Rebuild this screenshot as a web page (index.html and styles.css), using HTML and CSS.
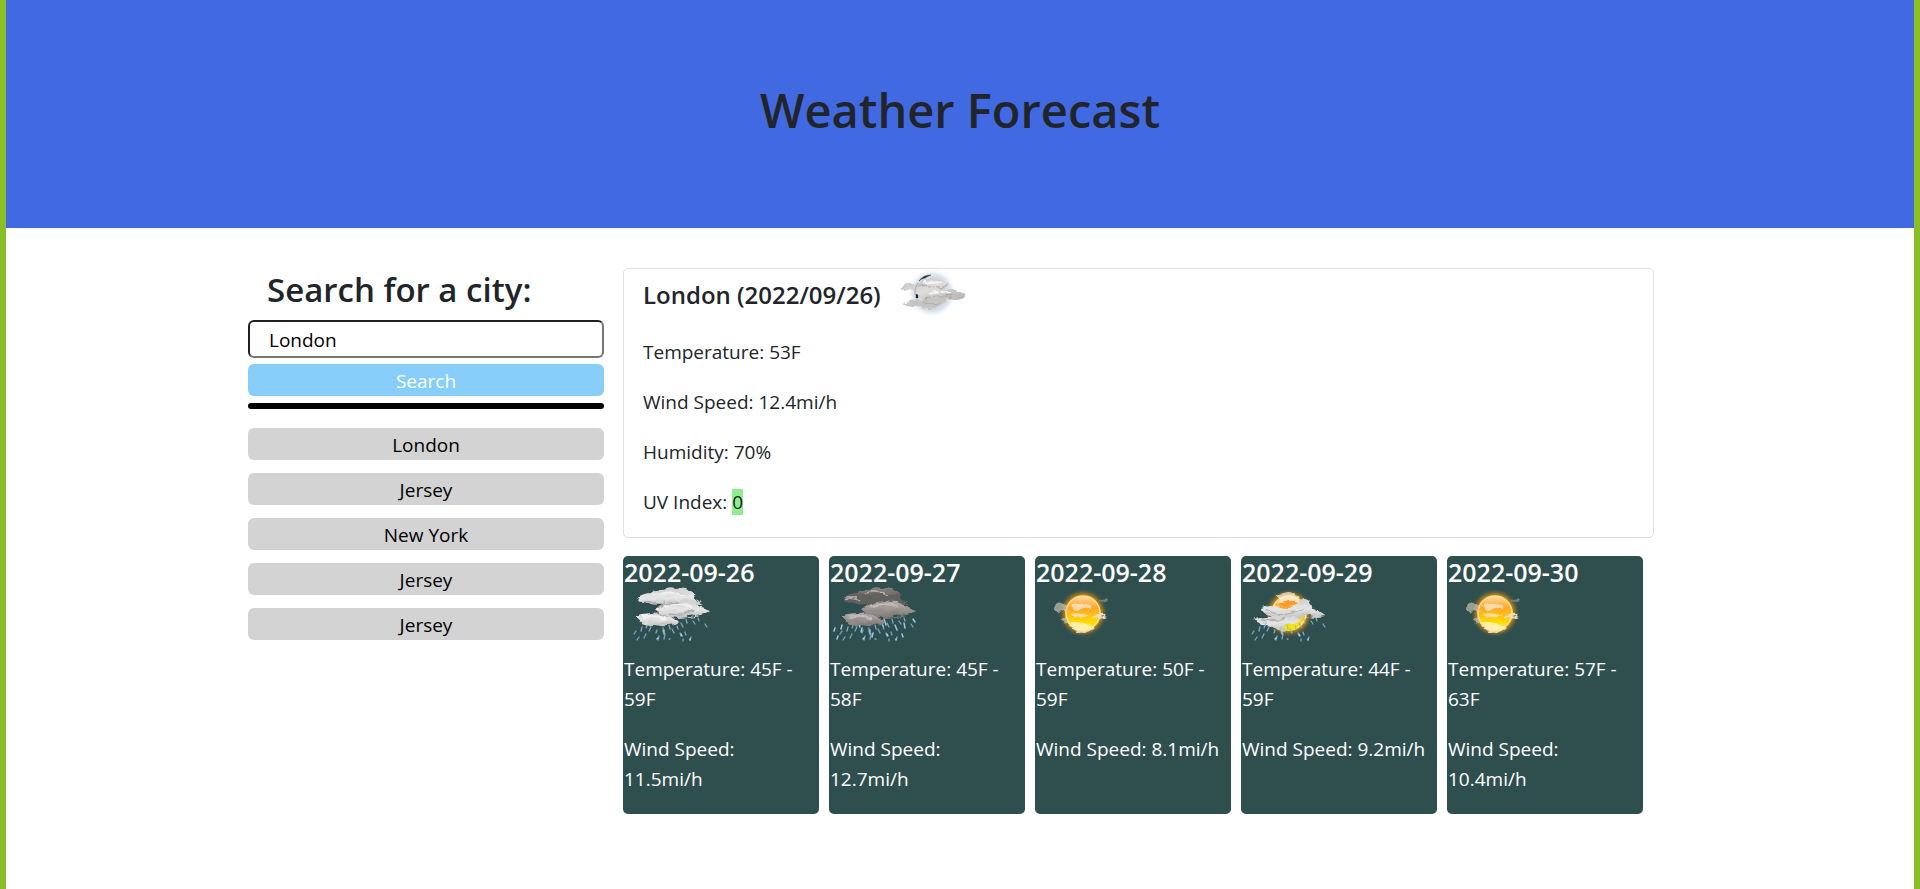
FILE: index.html
```html
<!DOCTYPE html>
<html lang="en">
<head>
<meta charset="utf-8">
<title>Weather Forecast</title>
<link rel="stylesheet" href="styles.css">
</head>
<body>
<svg class="defs" aria-hidden="true">
  <defs>
    <filter id="soft" x="-20%" y="-20%" width="140%" height="140%">
      <feTurbulence type="fractalNoise" baseFrequency="0.1 0.2" numOctaves="2" seed="4" result="noise"/>
      <feOffset in="SourceGraphic" dx="0" dy="1" result="shape"/>
      <feDisplacementMap in="shape" in2="noise" scale="6" xChannelSelector="R" yChannelSelector="G"/>
      <feGaussianBlur stdDeviation="0.7"/>
    </filter>
    <filter id="glow" x="-40%" y="-40%" width="180%" height="180%"><feGaussianBlur stdDeviation="2"/></filter>
    <filter id="haze" x="-20%" y="-20%" width="140%" height="140%"><feGaussianBlur stdDeviation="0.4"/></filter>
    <linearGradient id="light" x1="0" y1="0" x2="0" y2="1"><stop offset="0" stop-color="#cfcfcf"/><stop offset=".5" stop-color="#e6e6e6"/><stop offset="1" stop-color="#bcbcbc"/></linearGradient>
    <linearGradient id="dark" x1="0" y1="0" x2="0" y2="1"><stop offset="0" stop-color="#8a8683"/><stop offset=".4" stop-color="#64605e"/><stop offset="1" stop-color="#59605e"/></linearGradient>
    <linearGradient id="tan" x1="0" y1="0" x2="0" y2="1"><stop offset="0" stop-color="#b8b1ac"/><stop offset="1" stop-color="#7c7672"/></linearGradient>
    <linearGradient id="sunfill" x1="0" y1="0" x2="0" y2="1"><stop offset="0" stop-color="#ffd9a8"/><stop offset=".35" stop-color="#ffa62a"/><stop offset=".75" stop-color="#ffd800"/><stop offset="1" stop-color="#fff36b"/></linearGradient>
    <linearGradient id="mist" x1="0" y1="0" x2="1" y2="1"><stop offset="0" stop-color="#bdbdbb"/><stop offset=".45" stop-color="#dfdedc"/><stop offset="1" stop-color="#adacaa"/></linearGradient>
    <path id="cloud-top" d="M13 10q6-5 14-5 4-4 12-3 6-3 12-1 9-2 15 2 6 3 4 8 5 2 10 5-12 4-22 2-12 1-21-2-8 2-16-1-4 1-8-5z"/>
    <path id="cloud-mid" d="M32 22q4-5 12-6 8-5 17-2 9-1 14 4 6 2 12 4-3 3-8 4-7 3-15 3-9 2-16 0-10-2-16-7z"/>
    <path id="cloud-low" d="M12 29q7-3 15-3 7-3 13 0 8 1 14 8-2 4-10 4-7 1-14-1-9 0-13-3-4-1-5-5z"/>
    <g id="rain" fill="none" stroke="#8fb4d8" stroke-width="1.3" stroke-linecap="round" opacity=".85">
      <path d="M12 44l-2 3M18 40l-1 4M24 36l-2 5M27 40l-2 4M15 50l-2 3M22 47l-2 4M33 43l-1 3M39 41l0 4M35 49l-1 4M41 47l-1 5M45 38l1 4M48 42l2 4M45 52l1 0M53 39l1 3M57 36l2 4M56 46l1 3M61 45l1 3M67 50l-1 3M62 32l1 4M69 34l2 3M59 54l0-2M81 37l2 3M74 31l1 3"/>
      <path d="M27 36l-1 3M40 43l0 4M34 51l-1 1M57 47l1 2M66 52l0 1" stroke="#dbe9f6"/>
    </g>
    <g id="sun">
      <circle cx="47" cy="26" r="20" fill="#ff9d0a" opacity=".8" filter="url(#glow)"/>
      <circle cx="47" cy="26" r="17" fill="url(#sunfill)" stroke="#ffe27a" stroke-width="1.6"/>
    </g>
    <symbol id="icon-showers" viewBox="0 0 100 62">
      <use href="#rain"/>
      <g filter="url(#soft)">
        <g fill="url(#light)"><use href="#cloud-top"/><use href="#cloud-mid"/><use href="#cloud-low"/></g>
        <path d="M34 20q10-5 20-6M30 24q12 4 14 6M46 25q12 3 24-2M20 13q12 4 22 1" fill="none" stroke="#8f9190" stroke-width="1.4" opacity=".6"/>
        <path d="M40 19q12-6 28 0M18 29q12-3 24 2M28 7q18-3 34 0" fill="none" stroke="#fff" stroke-width="2" opacity=".6"/>
      </g>
    </symbol>
    <symbol id="icon-rain" viewBox="0 0 100 62">
      <use href="#rain"/>
      <path d="M5 41l-1 3M12 38l-1 4M29 36l1 4M32 41l-1 4M51 34l2 5M54 32l2 6M65 38l2 5M74 36l1 5M83 32l2 3M72 47l1 3M8 49l-1 3M43 46l-1 4" fill="none" stroke="#9fc6ec" stroke-width="1.5" stroke-linecap="round"/>
      <g filter="url(#soft)">
        <use href="#cloud-top" fill="url(#dark)"/><use href="#cloud-mid" fill="url(#tan)"/><use href="#cloud-low" fill="url(#tan)"/>
        <path d="M14 10q9-3 16 3M36 5q12-3 22 2M40 19q14-6 28 0M17 30q13-5 25 1" fill="none" stroke="#cfc6c0" stroke-width="1.8" opacity=".7"/>
      </g>
    </symbol>
    <symbol id="icon-sun" viewBox="0 0 100 62">
      <use href="#sun"/>
      <g filter="url(#soft)">
        <path d="M18 18q6-5 13 0l2 6q-8-3-10 3-4-5-5-9zM24 32l6-2 3 7z" fill="#cfc9bc" opacity=".65"/>
        <path d="M36 17q9-4 14-1 5 2 4 5-9-1-14 2-5 0-4-6zM36 25q8-2 18 2-8 4-17 2z" fill="#ffe6c4" opacity=".8"/>
        <path d="M30 35q9-3 14 1 7 0 16 4-5 5-12 5-10 0-18-10z" fill="#fff3c0" opacity=".8"/>
        <path d="M57 28q7-3 14 0-5 3-14 1z" fill="#f4e2c0" opacity=".95"/>
        <path d="M64 13l7-3-1 4-5 1z" fill="#aeb8b4" opacity=".5"/>
      </g>
    </symbol>
    <symbol id="icon-sun-rain" viewBox="0 0 100 62">
      <use href="#sun"/>
      <g filter="url(#soft)">
        <path d="M36 8q10-6 20 0l2 7-22 0z" fill="#fff0d8" opacity=".7"/>
        <path d="M38 15q8-4 18-1-6 4-16 4z" fill="#ff9a30"/>
        <path d="M20 20q8-4 18 0 8 3 14-3 8-7 14-4 5 4 4 8 8 2 13 7-8 2-16 0-8 2-16 1-9 3-16 0-8-1-13-3-1-3-2-6z" fill="url(#light)"/>
        <path d="M11 32q9-4 18-3 9-4 18 0 8-1 12 1-3 6-11 6-1 5-7 7-9 0-14-7-8 1-16-4z" fill="url(#light)"/>
        <path d="M24 22q12 6 22 3t18-4M18 32q12 2 26-2" fill="none" stroke="#8e8e8b" stroke-width="1.3" opacity=".55"/>
        <path d="M42 39q8-3 17-2-3 5-14 6z" fill="#f5e600"/>
      </g>
      <use href="#rain"/>
    </symbol>
    <symbol id="icon-night" viewBox="0 -3 100 62">
      <circle cx="47" cy="26" r="20" fill="#afc5dc" opacity=".6" filter="url(#glow)"/>
      <circle cx="47" cy="26" r="16" fill="#e0e0de"/>
      <g filter="url(#soft)">
        <path d="M15 19q7-5 16-2 4-5 13-7 12-1 17 5 2 5 0 6 11 0 20 7-8 5-18 2-8 6-17 3-10-1-15-5-2-6-6-6-6 1-10-3z" fill="url(#mist)"/>
        <path d="M18 35q8-3 17-3 8-4 18-1 7-1 10 2-8 7-18 8-8 0-12-3-8 1-15-3z" fill="#c6c5c3"/>
        <path d="M33 19q8-3 16 0t14-3M40 31q12-5 26-2M36 35q10 4 20 0" fill="none" stroke="#9d9c9a" stroke-width="1.3" opacity=".6"/>
        <path d="M38 14q10 1 18-1M45 25q10-3 21 1" fill="none" stroke="#f5f5f3" stroke-width="1.8"/>
      </g>
      <path d="M34 14q4-6 12-6-5 2-6 3-3 0-6 3zM31 27l2 1 0 3-2 0z" fill="#252a31" stroke="#252a31" stroke-width=".4" filter="url(#haze)"/>
      <path d="M33 16q-4 5-3 12" fill="none" stroke="#6c737c" stroke-width=".8" opacity=".6"/>
    </symbol>
  </defs>
</svg>
<header class="banner"><h1 class="banner-title">Weather Forecast</h1></header>
<main class="layout">
  <aside class="sidebar">
    <form class="search">
      <label class="search-label" for="city">Search for a city:</label>
      <input class="search-input" id="city" type="text" value="London">
      <button class="button button-search" type="button">Search</button>
    </form>
    <hr class="divider">
    <div class="history">
      <button class="button" type="button">London</button>
      <button class="button" type="button">Jersey</button>
      <button class="button" type="button">New York</button>
      <button class="button" type="button">Jersey</button>
      <button class="button" type="button">Jersey</button>
    </div>
  </aside>
  <div class="results">
    <section class="current">
      <h2 class="title">London (2022/09/26) <svg class="icon"><use href="#icon-night"/></svg></h2>
      <p>Temperature: 53F</p>
      <p>Wind Speed: 12.4mi/h</p>
      <p>Humidity: 70%</p>
      <p>UV Index: <span class="uv">0</span></p>
    </section>
    <section class="forecast">
      <article class="day"><h3 class="title">2022-09-26</h3><svg class="icon"><use href="#icon-showers"/></svg><p>Temperature: 45F - 59F</p><p>Wind Speed: 11.5mi/h</p></article>
      <article class="day"><h3 class="title">2022-09-27</h3><svg class="icon"><use href="#icon-rain"/></svg><p>Temperature: 45F - 58F</p><p>Wind Speed: 12.7mi/h</p></article>
      <article class="day"><h3 class="title">2022-09-28</h3><svg class="icon"><use href="#icon-sun"/></svg><p>Temperature: 50F - 59F</p><p>Wind Speed: 8.1mi/h</p></article>
      <article class="day"><h3 class="title">2022-09-29</h3><svg class="icon"><use href="#icon-sun-rain"/></svg><p>Temperature: 44F - 59F</p><p>Wind Speed: 9.2mi/h</p></article>
      <article class="day"><h3 class="title">2022-09-30</h3><svg class="icon"><use href="#icon-sun"/></svg><p>Temperature: 57F - 63F</p><p>Wind Speed: 10.4mi/h</p></article>
    </section>
  </div>
</main>
</body>
</html>
```
FILE: styles.css
```css
* { box-sizing: border-box; }
html { min-height: 100%; background: #fff; }
body {
  margin: 0;
  min-height: 100vh;
  border: solid #8abf26;
  border-width: 0 6px;
  color: #212529;
  font: 19px/30px "Open Sans", "Noto Sans", sans-serif;
}
h1, h2, h3, p { margin: 0; }
.defs { position: absolute; width: 0; height: 0; }
.banner { padding: 80px 20px 88px; background: #4169e1; text-align: center; }
.banner-title { font-size: 47px; line-height: 60px; font-weight: 600; }
.layout {
  display: grid;
  grid-template-columns: 356fr 1031fr;
  gap: 19px;
  max-width: 1424px;
  margin: 40px auto 0;
  padding-right: 18px;
  align-items: start;
}
.search { display: flex; flex-direction: column; }
.search-label { padding: 0 19px; font-size: 33px; line-height: 44px; font-weight: 600; margin-bottom: 8px; }
.search-input {
  width: 100%;
  height: 38px;
  padding: 1px 19px 0;
  border: 2px inset #767676;
  border-radius: 6px;
  background: #fff;
  color: #000;
  font: inherit;
  margin-bottom: 6px;
}
.button {
  height: 32px;
  padding: 1px 8px 0;
  border: 0;
  border-radius: 6px;
  background: #d3d3d3;
  color: #000;
  font: inherit;
}
.button-search { background: #87cefa; color: #fff; }
.divider { height: 6px; margin: 7px 0 19px; border: 0; border-radius: 3px; background: #000; }
.history { display: grid; gap: 13px; }
.current { padding: 0 19px; border: 1px solid #dfdfdf; border-radius: 5px; margin-bottom: 18px; }
.title { font-size: 25px; line-height: 30px; font-weight: 600; }
.icon { display: block; width: 100px; height: 62px; }
.current .title { display: flex; align-items: center; gap: 4px; height: 52px; margin-bottom: 16px; font-size: 24px; }
.current p, .day p { margin-bottom: 20px; }
.uv { background: #90ee90; }
.forecast { display: grid; grid-template-columns: repeat(5, 1fr); gap: 10px; padding-right: 11px; }
.day { padding: 1px 1px 0; border-radius: 5px; background: #2f4f4f; color: #fff; }
.day .icon { margin-bottom: 5px; }
```
